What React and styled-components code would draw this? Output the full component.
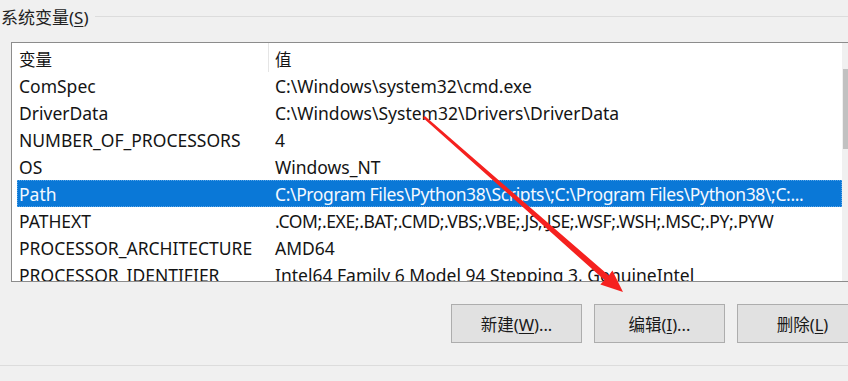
import styled, { createGlobalStyle } from 'styled-components';

const GlobalStyle = createGlobalStyle`
    html, body {
        margin: 0;
        padding: 0;
        background: #f0f0f0;
    }
    body {
        width: 848px;
        height: 381px;
        overflow: hidden;
        font-family: "Noto Sans", "Noto Sans CJK SC", sans-serif;
        color: #141414;
    }
`;

const rows = [
    ['ComSpec', 'C:\\Windows\\system32\\cmd.exe'],
    ['DriverData', 'C:\\Windows\\System32\\Drivers\\DriverData'],
    ['NUMBER_OF_PROCESSORS', '4'],
    ['OS', 'Windows_NT'],
    ['Path', 'C:\\Program Files\\Python38\\Scripts\\;C:\\Program Files\\Python38\\;C:...'],
    ['PATHEXT', '.COM;.EXE;.BAT;.CMD;.VBS;.VBE;.JS;.JSE;.WSF;.WSH;.MSC;.PY;.PYW'],
    ['PROCESSOR_ARCHITECTURE', 'AMD64'],
    ['PROCESSOR_IDENTIFIER', 'Intel64 Family 6 Model 94 Stepping 3, GenuineIntel'],
];

const App = () => {
    return (
        <>
            <GlobalStyle />
            <Page>
                <GroupHeader>
                    <GroupLabel>系统变量(<u>S</u>)</GroupLabel>
                    <GroupLine />
                </GroupHeader>

                <ListBox>
                    <ListBody>
                        <HeaderRow>
                            <HeaderCell>变量</HeaderCell>
                            <HeaderCell $last>值</HeaderCell>
                        </HeaderRow>
                        {rows.map(([name, value]) => (
                            <Row key={name} $selected={name === 'Path'}>
                                <NameCell>{name}</NameCell>
                                <ValueCell $tight={value.length > 60}>{value}</ValueCell>
                            </Row>
                        ))}
                    </ListBody>
                    <ScrollBar>
                        <Thumb />
                    </ScrollBar>
                </ListBox>

                <ButtonBar>
                    <Button>新建(<u>W</u>)...</Button>
                    <Button>编辑(<u>I</u>)...</Button>
                    <Button>删除(<u>L</u>)</Button>
                </ButtonBar>

                <FooterLine />

                <Arrow width="848" height="381" viewBox="0 0 848 381">
                    <polygon
                        points="424.8,116.1 608.8,275.5 612.4,270.4 623,292 600.4,284.5 604.4,280.1 423.2,117.9"
                        fill="#f5211f"
                    />
                </Arrow>
            </Page>
        </>
    );
};

const Page = styled.div`
    position: relative;
    width: 848px;
    height: 381px;
    overflow: hidden;
`;

const GroupHeader = styled.div`
    display: flex;
    align-items: center;
    height: 32px;
    padding-top: 1px;
    box-sizing: border-box;
`;

const GroupLabel = styled.div`
    font-size: 17px;
    padding-left: 1px;
    padding-right: 6px;
    white-space: nowrap;
    color: #222;

    u {
        text-underline-offset: 2px;
    }
`;

const GroupLine = styled.div`
    flex: 1;
    height: 1px;
    margin-top: -1px;
    background: #dcdcdc;
`;

const ListBox = styled.div`
    display: flex;
    margin: 10px 0 0 11px;
    width: 849px;
    height: 240px;
    box-sizing: border-box;
    border: 1px solid #8c8c8c;
    background: #fff;
    overflow: hidden;
`;

const ListBody = styled.div`
    width: 830px;
    flex-shrink: 0;
    overflow: hidden;
`;

const HeaderRow = styled.div`
    display: grid;
    grid-template-columns: 257px 1fr;
    height: 29px;
    align-items: center;
`;

const HeaderCell = styled.div`
    font-size: 16.5px;
    padding-left: ${(p) => (p.$last ? '6px' : '7px')};
    padding-top: 3px;
    height: 100%;
    display: flex;
    align-items: center;
    border-right: ${(p) => (p.$last ? 'none' : '1px solid #e5e5e5')};
    box-sizing: border-box;
`;

const Row = styled.div`
    display: grid;
    grid-template-columns: 257px 1fr;
    height: 27px;
    align-items: center;
    margin-left: 5px;
    font-size: 17.5px;
    white-space: nowrap;
    box-sizing: border-box;
    background: ${(p) => (p.$selected ? '#0a78d7' : 'transparent')};
    color: ${(p) => (p.$selected ? '#f4f8ff' : '#141414')};
    outline: ${(p) => (p.$selected ? '1px dotted #5aa6e8' : 'none')};
    outline-offset: -1px;
`;

const NameCell = styled.div`
    padding-left: 2px;
    padding-top: 1px;
    overflow: hidden;
`;

const ValueCell = styled.div`
    padding-left: 1px;
    padding-top: 1px;
    overflow: hidden;
    letter-spacing: ${(p) => (p.$tight ? '-0.37px' : '0')};
`;

const ScrollBar = styled.div`
    width: 17px;
    flex-shrink: 0;
    background: #f0f0f0;
    padding: 26px 0 0 1px;
    box-sizing: border-box;
`;

const Thumb = styled.div`
    width: 15px;
    height: 80px;
    background: #c1c1c1;
`;

const ButtonBar = styled.div`
    display: flex;
    gap: 12px;
    margin-top: 22px;
    padding-left: 451px;
`;

const Button = styled.button`
    flex-shrink: 0;
    width: 131px;
    height: 39px;
    background: #e1e1e1;
    border: 1px solid #adadad;
    font-family: "Noto Sans", "Noto Sans CJK SC", sans-serif;
    font-size: 16.5px;
    color: #1a1a1a;
    padding: 0;

    u {
        text-underline-offset: 2px;
    }
`;

const FooterLine = styled.div`
    margin-top: 22px;
    height: 1px;
    background: #dcdcdc;
`;

const Arrow = styled.svg`
    position: absolute;
    left: 0;
    top: 0;
    pointer-events: none;
`;

export default App;
